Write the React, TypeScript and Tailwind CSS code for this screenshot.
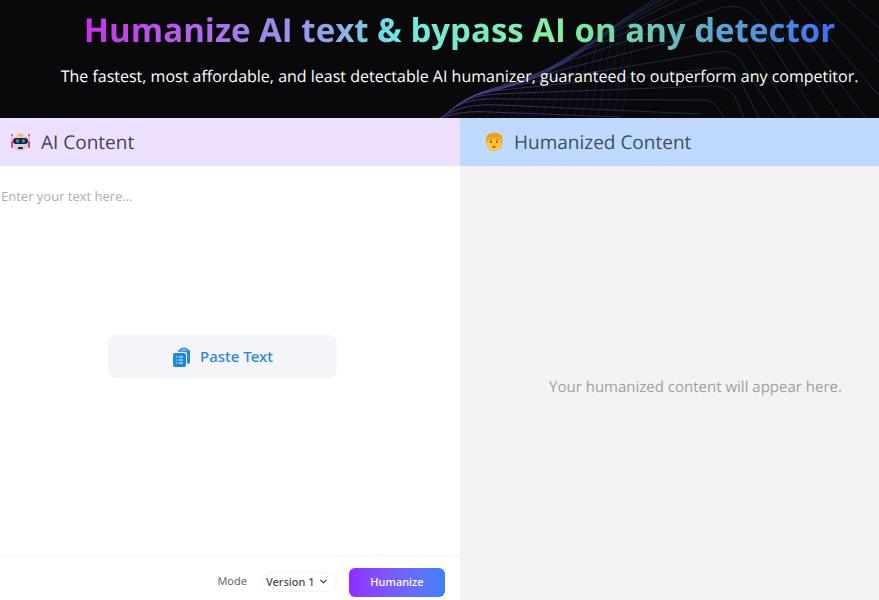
import { FiChevronDown } from "react-icons/fi";

// Long contours of the wave, each running right to its corner and then bending down
const waveLines = [
  "M440 118 C460 112 470 111 490 112 L620 117",
  "M442 117 C460 106 475 104 500 105 L700 114",
  "M445 115 C462 99 480 98 510 99 L705 100 Q716 101 724 118",
  "M449 112 C466 95 485 94 520 93 L712 86 Q729 86 735 97 L744 118",
  "M453 109 C470 92 490 91 530 87 L720 68 Q731 66 738 76 L759 118",
  "M458 106 C476 90 500 88 540 81 L716 52 Q732 49 740 60 L777 118",
  "M464 102 C480 89 510 85 550 73 L716 30 Q734 26 745 40 L795 118",
  "M470 98 C490 88 525 80 565 62 L724 7 Q744 3 756 19 L818 118",
  "M478 95 C505 87 540 76 575 54 L716 -6 M760 0 L841 118",
  "M486 93 C520 84 550 70 585 46 L690 -6 M777 0 L866 118",
  "M496 90 C532 80 560 64 596 38 L680 -6 M798 0 L879 96",
  "M506 87 C540 78 570 60 605 32 L672 -6 M820 0 L879 62",
  "M518 84 C550 73 580 54 613 27 L667 -6 M848 0 L879 28",
  "M530 80 C560 68 590 48 620 22 L662 -6",
];

// Fine ribs that drop from the upper edge of the wave, from left to right
const waveRibs = Array.from({ length: 24 }, (_, i) => {
  const x = 452 + i * 8;
  const y = x < 540 ? 111 - (x - 452) * 0.35 : 80 - (x - 540) * 0.6;
  return `M${x} ${y} L${x - 14} 118`;
});

export default function App() {
  return (
    <div className="flex min-h-screen flex-col bg-white [font-family:'Open_Sans',sans-serif] [text-rendering:geometricPrecision]">
      <header className="relative h-[118px] shrink-0 overflow-hidden bg-[#09090b]">
        <HeroWaves />
        <div className="relative flex flex-col items-center pt-[7px] pl-10 text-center whitespace-nowrap">
          <h1 className="bg-[linear-gradient(90deg,#c931e8_0%,#8fa9e8_33%,#70e8e4_42%,#86ee99_64%,#3b70f5_100%)] bg-clip-text text-[33px] leading-[46px] font-bold text-transparent">
            Humanize AI text &amp; bypass AI on any detector
          </h1>
          <p className="mt-2 text-base leading-[30px] text-white">
            The fastest, most affordable, and least detectable AI humanizer, guaranteed to outperform any competitor.
          </p>
        </div>
      </header>

      <main className="grid flex-1 grid-cols-[460fr_419fr]">
        {/* AI content */}
        <section className="flex flex-col">
          <div className="flex h-12 items-center gap-[10px] bg-[#ede0fe] pl-[10px]">
            <RobotIcon />
            <h2 className="text-[19px] text-[#454052]">AI Content</h2>
          </div>
          <div className="relative flex flex-1 flex-col">
            <textarea
              aria-label="AI content"
              placeholder="Enter your text here..."
              className="w-full flex-1 resize-none px-px pt-[18px] text-[13px] leading-6 outline-none placeholder:text-[#a9b0b8]"
            />
            <div className="pointer-events-none absolute inset-0 flex items-center justify-center pr-[15px] pb-2">
              <button className="pointer-events-auto flex h-[43px] w-[229px] items-center justify-center gap-2 rounded-lg bg-[#f3f5f9] [font-family:'Noto_Sans',sans-serif] text-[15px] font-medium text-[#2f86d6]">
                <PasteIcon />
                Paste Text
              </button>
            </div>
          </div>
          <div className="flex h-[45px] items-center justify-end border-t border-[#f2f2f2] pt-2 pr-[15px] [font-family:'Noto_Sans',sans-serif] text-[11px]">
            <label htmlFor="mode" className="text-[#666]">
              Mode
            </label>
            <div className="relative ml-[14px]">
              <select
                id="mode"
                className="h-5 w-[76px] appearance-none rounded-full border border-[#f2f2f4] bg-white pl-1 font-medium text-[#4b4b4b]"
              >
                <option>Version 1</option>
                <option>Version 2</option>
              </select>
              <FiChevronDown size={11} strokeWidth={3} className="pointer-events-none absolute top-1 right-2 text-[#444]" />
            </div>
            <button className="ml-3 h-[29px] w-24 rounded-md bg-gradient-to-r from-[#9229ff] to-[#3b82f6] font-medium text-white">
              Humanize
            </button>
          </div>
        </section>

        {/* Humanized content */}
        <section className="flex flex-col bg-[#f3f3f3]">
          <div className="flex h-12 items-center gap-[10px] bg-[#bfdafe] pl-6">
            <FaceIcon />
            <h2 className="text-[19px] text-[#414d5e]">Humanized Content</h2>
          </div>
          <div className="flex flex-1 items-center justify-center pt-2 pl-[52px]">
            <p className="text-[15px] text-[#a0a0a0]">Your humanized content will appear here.</p>
          </div>
        </section>
      </main>
    </div>
  );
}

function HeroWaves() {
  return (
    <svg className="absolute top-0 right-0" width="879" height="118" viewBox="0 0 879 118" fill="none" aria-hidden="true">
      <defs>
        <linearGradient id="wave" x1="440" y1="118" x2="700" y2="0" gradientUnits="userSpaceOnUse">
          <stop stopColor="#6c50b8" />
          <stop offset="0.5" stopColor="#37407f" />
          <stop offset="1" stopColor="#243b69" />
        </linearGradient>
      </defs>
      {waveLines.map((d) => (
        <path key={d} d={d} stroke="url(#wave)" strokeWidth="1" opacity="0.6" />
      ))}
      {waveRibs.map((d) => (
        <path key={d} d={d} stroke="#4a4690" strokeWidth="1" opacity="0.2" />
      ))}
    </svg>
  );
}

function RobotIcon() {
  return (
    <svg width="21" height="21" viewBox="0 0 21 21" aria-hidden="true">
      <path d="M2 3v9M19 3v9" stroke="#f48bad" strokeWidth="1" />
      <rect x="1" y="9" width="2" height="7" rx="1" fill="#e83f70" />
      <rect x="18" y="9" width="2" height="7" rx="1" fill="#e83f70" />
      <circle cx="2" cy="3" r="1" fill="#e83f70" />
      <circle cx="19" cy="3" r="1" fill="#e83f70" />
      <path d="M3 10q0-7 7.500-7t7.500 7v3q0 6-7.500 6t-7.500-6z" fill="#d6d0da" />
      <path d="M7 4q0-2.500 3.500-2.500t3.500 2.500z" fill="#ffb25e" />
      <rect x="3" y="6" width="15" height="6" rx="3" fill="#25232d" />
      <ellipse cx="7.500" cy="9" rx="1.500" ry="2" fill="#18a5cf" />
      <ellipse cx="13.500" cy="9" rx="1.500" ry="2" fill="#18a5cf" />
      <rect x="8" y="15" width="5" height="2" rx="0.500" fill="#292632" />
    </svg>
  );
}

function FaceIcon() {
  return (
    <svg width="20" height="20" viewBox="0 0 20 20" aria-hidden="true">
      <path d="M2 9Q1 2 8 1q8-1 10 4 1 2 0 6-1 8-8 8T2 9z" fill="#eda01d" />
      <path d="M3 10q0-3 2-4 5 1 10 0 2 1 2 4v2q-1 7-7 7t-7-7z" fill="#ffc83d" />
      <circle cx="7" cy="10" r="1" fill="#7d4533" />
      <circle cx="13" cy="10" r="1" fill="#7d4533" />
      <path d="M5 8q2-1 3 0M12 8q2-1 3 0" stroke="#b86c24" fill="none" />
      <path d="M9 12h2" stroke="#e28a20" />
      <ellipse cx="10" cy="15" rx="2" ry="1" fill="#d94b3c" />
    </svg>
  );
}

function PasteIcon() {
  return (
    <svg width="20" height="20" viewBox="0 0 20 20" aria-hidden="true">
      <path d="M6 5V4q0-1.500 2-1.500Q9 .5 12 .5t4 2q2 0 2 2V15q0 2-2 2" fill="#2389dc" />
      <path d="M9.500 3.500q2.500-2.500 5 0" stroke="#f3f5f9" fill="none" />
      <rect x="1" y="4.800" width="14" height="15.200" rx="2.500" fill="#f3f5f9" />
      <rect x="1" y="6" width="13" height="14" rx="2" fill="#1d87e0" />
      <path d="M4 10h1M6.500 10H11M4 13h1M6.500 13H11M4 16h1M6.500 16H11" stroke="#fff" strokeWidth="1.200" />
    </svg>
  );
}
